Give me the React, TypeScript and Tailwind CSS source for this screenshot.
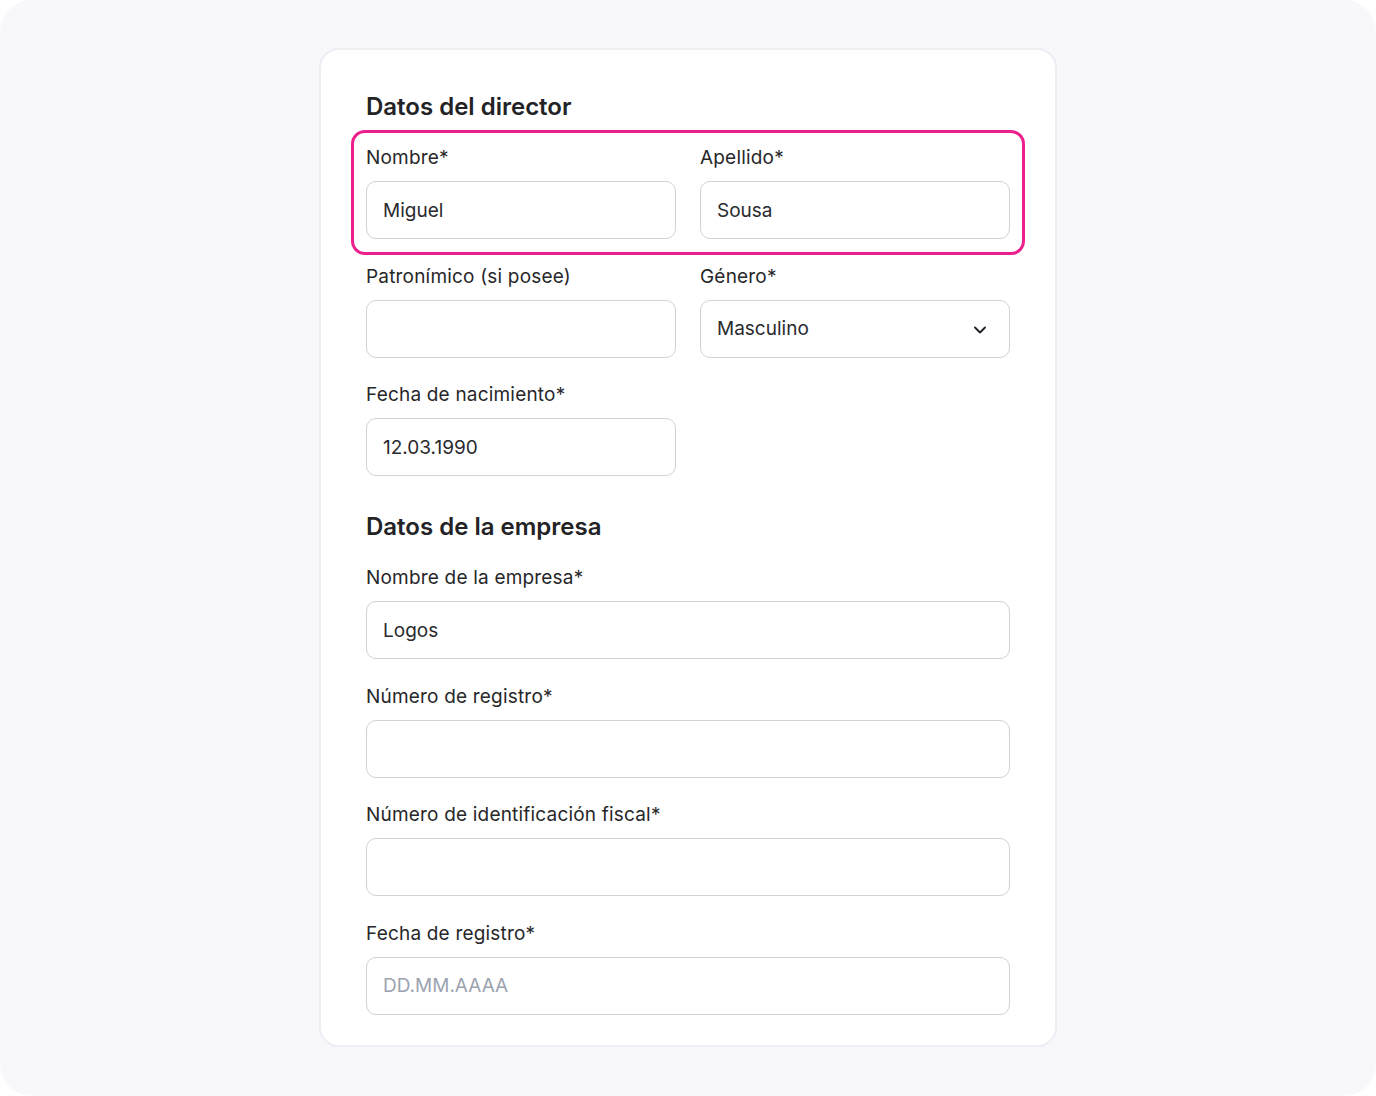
import { ChevronDown } from 'lucide-react';

type FieldProps = {
  label: string;
  value?: string;
  placeholder?: string;
  select?: boolean;
};

function Field({ label, value, placeholder, select }: FieldProps) {
  return (
    <div className="flex flex-col">
      <label className="text-[19px] leading-6 tracking-[0.01em] text-[#27272a] pt-px mb-[11px]">{label}</label>
      <div className="h-[58px] rounded-[10px] border-[1.5px] border-[#d0d3d8] bg-white flex items-center justify-between pl-[16px] pr-[19px] pt-[2px]">
        {value ? (
          <span className="text-[19px] text-[#2a2a2e]">{value}</span>
        ) : (
          <span className="text-[19px] text-[#9ca3af]">{placeholder}</span>
        )}
        {select && <ChevronDown size={20} strokeWidth={2.25} className="text-[#1f2125]" />}
      </div>
    </div>
  );
}

export default function App() {
  return (
    <div className="min-h-screen bg-white font-['Inter',sans-serif]">
      <div className="h-[1096px] rounded-[32px] bg-[#f8f8fc] pt-[48px]">
        <div className="w-[738px] mx-auto bg-white rounded-[20px] border-2 border-[#eceef2] px-[45px] pt-[43px] pb-[30px]">
          <h2 className="text-[24px] leading-7 font-semibold text-[#232326] mb-6">Datos del director</h2>
          <div className="flex flex-col gap-[24.5px]">
            <div className="-mx-[15px] -mt-[15px] -mb-[16px] px-3 pt-3 pb-[13px] border-[3px] border-[#ec1f8e] rounded-[14px]">
              <div className="grid grid-cols-2 gap-6">
                <Field label="Nombre*" value="Miguel" />
                <Field label="Apellido*" value="Sousa" />
              </div>
            </div>
            <div className="grid grid-cols-2 gap-6">
              <Field label="Patronímico (si posee)" />
              <Field label="Género*" value="Masculino" select />
            </div>
            <div className="grid grid-cols-2 gap-6">
              <Field label="Fecha de nacimiento*" value="12.03.1990" />
            </div>
          </div>

          <h2 className="text-[24px] leading-7 font-semibold text-[#232326] mt-[37px] mb-6">Datos de la empresa</h2>
          <div className="flex flex-col gap-[24.5px]">
            <Field label="Nombre de la empresa*" value="Logos" />
            <Field label="Número de registro*" />
            <Field label="Número de identificación fiscal*" />
            <Field label="Fecha de registro*" placeholder="DD.MM.AAAA" />
          </div>
        </div>
      </div>
    </div>
  );
}
